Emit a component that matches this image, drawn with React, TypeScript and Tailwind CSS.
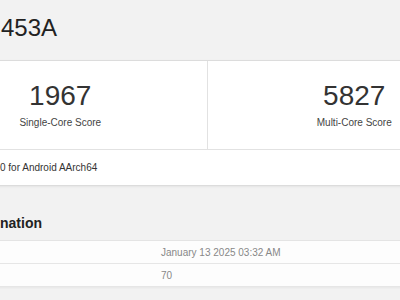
import React from 'react'

// Benchmark result page, cropped: content column starts left of the viewport
const scores = [
  { value: '1967', label: 'Single-Core Score' },
  { value: '5827', label: 'Multi-Core Score' },
]

const info = [
  { label: '', value: 'January 13 2025 03:32 AM' },
  { label: '', value: '70' },
]

export default function App() {
  return (
    <div className="min-h-screen bg-[#f2f2f2] overflow-hidden font-['Liberation_Sans',Arial,sans-serif]">
      <div className="ml-[-86px] w-[587px]">
        <h1 className="pl-[87px] pt-[16px] h-[60px] text-[24px] leading-none text-[#222]">453A</h1>

        {/* Score card */}
        <div className="bg-white border-t border-b border-[#dcdcdc] shadow-[0_1px_2px_rgba(0,0,0,0.06)]">
          <div className="grid grid-cols-2 border-b border-[#e2e2e2]">
            {scores.map((s, i) => (
              <div
                key={s.label}
                className={`h-[88px] flex flex-col items-center justify-center ${i === 0 ? 'border-r border-[#e2e2e2]' : ''}`}
              >
                <div className="text-[28px] leading-none text-[#333]">{s.value}</div>
                <div className="mt-[8px] text-[10px] leading-none text-[#444]">{s.label}</div>
              </div>
            ))}
          </div>
          <div className="h-[35px] flex items-center pl-[86px] text-[10px] text-[#333]">
            0 for Android AArch64
          </div>
        </div>

        <h2 className="pl-[86px] pt-[30px] pb-[10px] text-[14px] leading-none font-bold text-[#222]">nation</h2>

        {/* Info table */}
        <div className="border-t border-[#e4e4e4] shadow-[0_1px_2px_rgba(0,0,0,0.05)]">
          {info.map((row, i) => (
            <div key={i} className="h-[23px] flex items-center bg-[#fdfdfd] border-b border-[#e6e6e6]">
              <div className="w-[247px] shrink-0 text-[10px] text-[#333]">{row.label}</div>
              <div className="text-[10px] text-[#888]">{row.value}</div>
            </div>
          ))}
        </div>
      </div>
    </div>
  )
}
